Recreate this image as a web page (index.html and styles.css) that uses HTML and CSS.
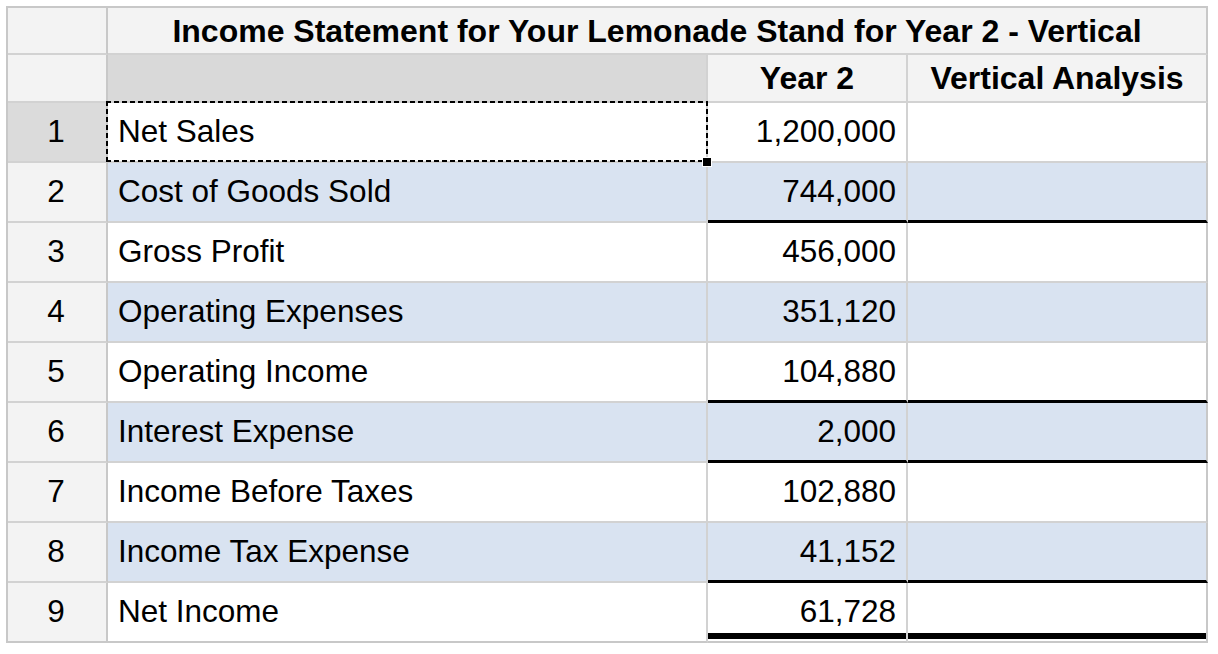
FILE: index.html
```html
<!DOCTYPE html>
<html lang="en">
<head>
<meta charset="utf-8">
<title>Income Statement</title>
<link rel="stylesheet" href="styles.css">
</head>
<body>
<div class="sheet">
  <div class="cell rh"></div>
  <div class="cell title">Income Statement for Your Lemonade Stand for Year 2 - Vertical</div>

  <div class="cell rh"></div>
  <div class="cell head-blank"></div>
  <div class="cell colhead">Year 2</div>
  <div class="cell colhead last">Vertical Analysis</div>

  <div class="cell rh rh-sel">1</div>
  <div class="cell label selected">Net Sales<span class="handle"></span></div>
  <div class="cell num">1,200,000</div>
  <div class="cell num last"></div>

  <div class="cell rh">2</div>
  <div class="cell label blue">Cost of Goods Sold</div>
  <div class="cell num blue rule">744,000</div>
  <div class="cell num blue rule last"></div>

  <div class="cell rh">3</div>
  <div class="cell label">Gross Profit</div>
  <div class="cell num">456,000</div>
  <div class="cell num last"></div>

  <div class="cell rh">4</div>
  <div class="cell label blue">Operating Expenses</div>
  <div class="cell num blue">351,120</div>
  <div class="cell num blue last"></div>

  <div class="cell rh">5</div>
  <div class="cell label">Operating Income</div>
  <div class="cell num rule">104,880</div>
  <div class="cell num rule last"></div>

  <div class="cell rh">6</div>
  <div class="cell label blue">Interest Expense</div>
  <div class="cell num blue rule">2,000</div>
  <div class="cell num blue rule last"></div>

  <div class="cell rh">7</div>
  <div class="cell label">Income Before Taxes</div>
  <div class="cell num">102,880</div>
  <div class="cell num last"></div>

  <div class="cell rh">8</div>
  <div class="cell label blue">Income Tax Expense</div>
  <div class="cell num blue rule">41,152</div>
  <div class="cell num blue rule last"></div>

  <div class="cell rh bottom">9</div>
  <div class="cell label bottom">Net Income</div>
  <div class="cell num total">61,728</div>
  <div class="cell num total last"></div>
</div>
</body>
</html>
```
FILE: styles.css
```css
* { box-sizing: border-box; }

html, body {
  margin: 0;
  padding: 0;
  background: #ffffff;
}

body {
  padding: 6px 0 0 6px;
  font-family: "Liberation Sans", Arial, sans-serif;
  font-size: 31.5px;
  color: #000;
}

.sheet {
  display: grid;
  grid-template-columns: 100px 600px 200px 300px;
  grid-template-rows: 47px 48px repeat(9, 60px);
  width: 1202px;
  border-top: 2px solid #c8c8c8;
  border-left: 2px solid #c8c8c8;
}

.cell {
  position: relative;
  display: flex;
  align-items: center;
  line-height: 1;
  white-space: nowrap;
  background: #ffffff;
  border-right: 2px solid #d2d2d2;
  border-bottom: 2px solid #d2d2d2;
}

.rh {
  justify-content: center;
  background: #f3f3f3;
  border-right-color: #c8c8c8;
  padding-right: 2px;
}

.rh-sel {
  background: #dbdbdb;
}

.title {
  grid-column: 2 / span 3;
  justify-content: center;
  font-weight: bold;
  font-size: 32px;
  background: #f3f3f3;
  border-right-color: #c8c8c8;
}

.head-blank {
  background: #d9d9d9;
}

.colhead {
  justify-content: center;
  font-weight: bold;
  font-size: 32px;
  background: #f3f3f3;
}

.label {
  padding-left: 10px;
}

.num {
  justify-content: flex-end;
  padding-right: 10px;
}

.last {
  border-right-color: #c8c8c8;
}

.blue {
  background: #d9e3f1;
}

.rule {
  border-bottom: 3px solid #000;
}

.bottom {
  border-bottom-color: #c8c8c8;
}

.total {
  border-bottom-color: #c8c8c8;
  box-shadow: inset 0 -2px 0 #ffffff, inset 0 -8px 0 #000000;
}

.selected::before {
  content: "";
  position: absolute;
  left: -2px;
  top: -2px;
  right: -2px;
  bottom: -1px;
  pointer-events: none;
  background:
    repeating-linear-gradient(90deg, #000 0 5px, transparent 5px 8px) left top / 100% 2px no-repeat,
    repeating-linear-gradient(90deg, #000 0 5px, transparent 5px 8px) left bottom / 100% 2px no-repeat,
    repeating-linear-gradient(180deg, #000 0 5px, transparent 5px 8px) left top / 2px 100% no-repeat,
    repeating-linear-gradient(180deg, #000 0 5px, transparent 5px 8px) right top / 2px 100% no-repeat;
}

.handle {
  position: absolute;
  right: -6px;
  bottom: -6px;
  width: 10px;
  height: 10px;
  background: #000;
  border: 1px solid #fff;
  z-index: 2;
}
```
